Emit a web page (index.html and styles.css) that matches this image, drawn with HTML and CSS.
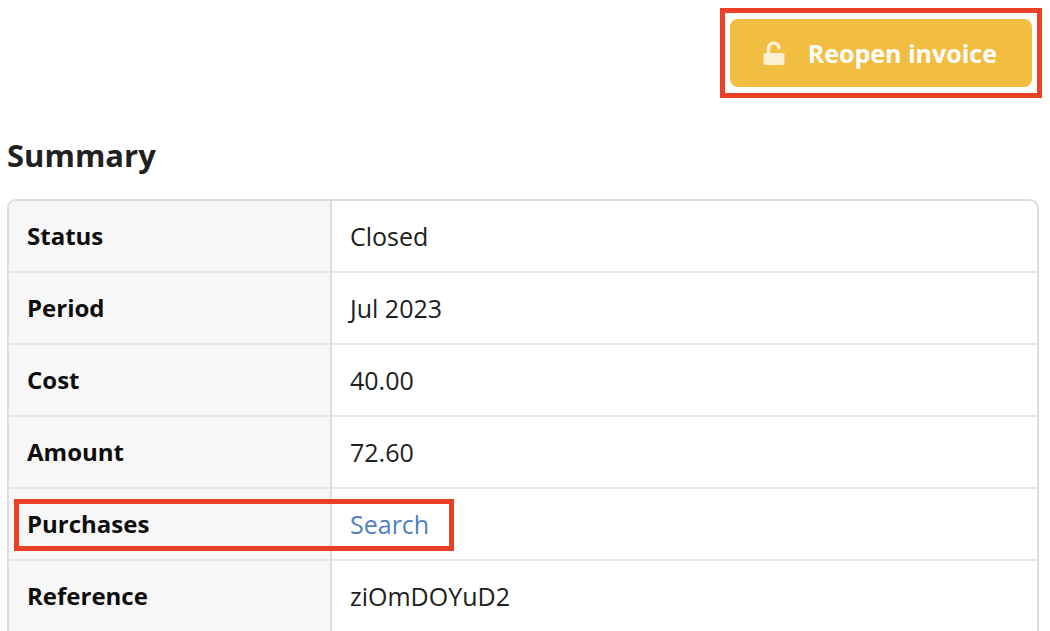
FILE: index.html
```
<!DOCTYPE html>
<html lang="en">
<head>
    <meta charset="utf-8">
    <title>Invoice</title>
    <link rel="stylesheet" href="styles.css">
</head>
<body>
    <div class="toolbar">
        <div class="highlight">
            <button type="button" class="button">
                <svg class="icon" viewBox="0 0 22 26" aria-hidden="true">
                    <path d="M5.500 14V8.500a5 5 0 0 1 10.500-.5" fill="none" stroke="currentColor" stroke-width="3.500" stroke-linecap="round"/>
                    <rect x="0.500" y="13" width="21" height="12" rx="2" fill="currentColor"/>
                </svg>
                Reopen invoice
            </button>
        </div>
    </div>

    <h2>Summary</h2>
    <table class="summary">
        <tbody>
            <tr>
                <th scope="row">Status</th>
                <td>Closed</td>
            </tr>
            <tr>
                <th scope="row">Period</th>
                <td>Jul 2023</td>
            </tr>
            <tr>
                <th scope="row">Cost</th>
                <td>40.00</td>
            </tr>
            <tr>
                <th scope="row">Amount</th>
                <td>72.60</td>
            </tr>
            <tr class="marked">
                <th scope="row">Purchases</th>
                <td><a href="#search">Search</a></td>
            </tr>
            <tr>
                <th scope="row">Reference</th>
                <td>ziOmDOYuD2</td>
            </tr>
        </tbody>
    </table>
</body>
</html>
```

FILE: styles.css
```
body {
    margin: 0;
    padding: 8px 11px 0 7px;
    overflow: hidden;
    font-family: "Open Sans", sans-serif;
    font-size: 25px;
    line-height: 34px;
    color: #212121;
    background-color: #fff;
}

.toolbar {
    display: flex;
    justify-content: flex-end;
    margin-right: -3px;
}

.highlight {
    padding: 6px 5px;
    border: 5px solid #ea4025;
}

.button {
    display: flex;
    align-items: center;
    gap: 23px;
    height: 68px;
    padding: 0 35px 0 33px;
    border: none;
    border-radius: 8px;
    background-color: #f2be42;
    color: #fff;
    font-family: inherit;
    font-size: 25px;
    font-weight: bold;
    cursor: pointer;
}

.icon {
    width: 22px;
    height: 26px;
    color: #fcf0d1;
}

h2 {
    margin: 35px 0 22px;
    font-size: 31px;
    line-height: 44px;
}

.summary {
    width: 100%;
    border: 2px solid #dcdcdc;
    border-radius: 9px 9px 0 0;
    border-collapse: separate;
    border-spacing: 0;
    table-layout: fixed;
}

.summary th,
.summary td {
    height: 70px;
    padding: 0 18px;
    text-align: left;
    border-bottom: 2px solid #e5e5e5;
}

.summary th {
    width: 285px;
    border-right: 2px solid #dcdcdc;
    background-color: #f7f7f7;
    color: #0d0d0d;
    font-size: 24px;
}

.summary tr:first-child th {
    border-top-left-radius: 7px;
}

.summary a {
    color: #4f81c3;
    text-decoration: none;
}

.marked {
    position: relative;
}

/* red frame drawn over the label and its link */
.marked th::after {
    content: "";
    position: absolute;
    top: 10px;
    left: 5px;
    box-sizing: border-box;
    width: 440px;
    height: 52px;
    border: 5px solid #ea4025;
    pointer-events: none;
}
```
